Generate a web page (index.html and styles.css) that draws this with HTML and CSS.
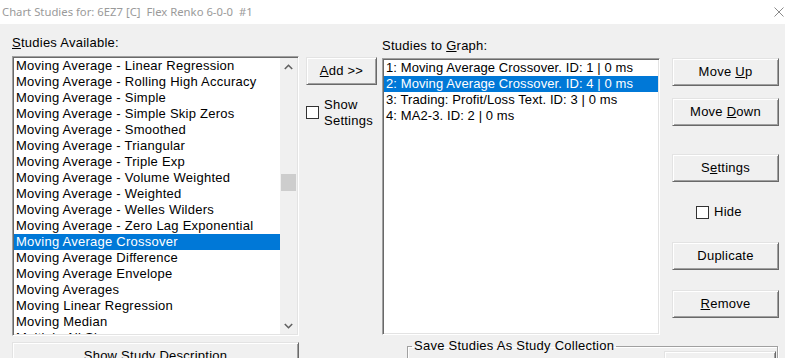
FILE: index.html
```html
<!DOCTYPE html>
<html>
<head>
<meta charset="utf-8">
<link rel="stylesheet" href="styles.css">
</head>
<body>
<div class="titlebar">
  <span class="title">Chart Studies for: 6EZ7 [C]  Flex Renko 6-0-0  #1</span>
  <svg class="close" width="10" height="10" viewBox="0 0 10 10"><path d="M0.5 0.5L9.5 9.5M9.5 0.5L0.5 9.5" stroke="#8a8a8a" stroke-width="1" fill="none"/></svg>
</div>
<div class="main">
  <div class="col col-avail">
    <div class="label label-avail"><u>S</u>tudies Available:</div>
    <div class="listbox list-avail">
      <div class="items">
        <div class="row">Moving Average - Linear Regression</div>
        <div class="row">Moving Average - Rolling High Accuracy</div>
        <div class="row">Moving Average - Simple</div>
        <div class="row">Moving Average - Simple Skip Zeros</div>
        <div class="row">Moving Average - Smoothed</div>
        <div class="row">Moving Average - Triangular</div>
        <div class="row">Moving Average - Triple Exp</div>
        <div class="row">Moving Average - Volume Weighted</div>
        <div class="row">Moving Average - Weighted</div>
        <div class="row">Moving Average - Welles Wilders</div>
        <div class="row">Moving Average - Zero Lag Exponential</div>
        <div class="row sel">Moving Average Crossover</div>
        <div class="row">Moving Average Difference</div>
        <div class="row">Moving Average Envelope</div>
        <div class="row">Moving Averages</div>
        <div class="row">Moving Linear Regression</div>
        <div class="row">Moving Median</div>
        <div class="row">Multiple All Slopes</div>
      </div>
      <div class="scrollbar">
        <div class="arrow"><svg width="9" height="6" viewBox="0 0 9 6"><path d="M0.8 5L4.5 1.3L8.2 5" stroke="#606060" stroke-width="1.6" fill="none"/></svg></div>
        <div class="track"><div class="thumb"></div></div>
        <div class="arrow"><svg width="9" height="6" viewBox="0 0 9 6"><path d="M0.8 1L4.5 4.7L8.2 1" stroke="#606060" stroke-width="1.6" fill="none"/></svg></div>
      </div>
    </div>
  </div>
  <div class="col col-add">
    <div class="btn btn-add"><span><u>A</u>dd &gt;&gt;</span></div>
    <div class="check check-show">
      <span class="box"></span>
      <span class="check-text">Show<br>Settings</span>
    </div>
  </div>
  <div class="col col-graph">
    <div class="label label-graph">Studies to <u>G</u>raph:</div>
    <div class="listbox list-graph">
      <div class="items">
        <div class="row">1: Moving Average Crossover. ID: 1 | 0 ms</div>
        <div class="row sel">2: Moving Average Crossover. ID: 4 | 0 ms</div>
        <div class="row">3: Trading: Profit/Loss Text. ID: 3 | 0 ms</div>
        <div class="row">4: MA2-3. ID: 2 | 0 ms</div>
      </div>
    </div>
  </div>
  <div class="col col-actions">
    <div class="btn"><span>Move <u>U</u>p</span></div>
    <div class="btn btn-down"><span>Move <u>D</u>own</span></div>
    <div class="btn btn-settings"><span>S<u>e</u>ttings</span></div>
    <div class="check check-hide">
      <span class="box"></span>
      <span class="check-text">Hide</span>
    </div>
    <div class="btn btn-dup"><span>Duplicate</span></div>
    <div class="btn btn-remove"><span><u>R</u>emove</span></div>
  </div>
</div>
<div class="bottom">
  <div class="btn btn-desc"><span>Show Study Description</span></div>
  <fieldset class="group">
    <legend>Save Studies As Study Collection</legend>
    <div class="group-body">
      <div class="btn btn-save"></div>
    </div>
  </fieldset>
</div>
</body>
</html>
```

FILE: styles.css
```css
html, body {
  margin: 0;
  padding: 0;
  width: 785px;
  height: 358px;
  overflow: hidden;
}
body {
  background: #f0f0f0;
  font-family: "Liberation Sans", Arial, sans-serif;
  font-size: 13px;
  letter-spacing: 0.25px;
  color: #000;
  line-height: 16px;
}
u { text-decoration: underline; text-underline-offset: 1px; }

.titlebar {
  height: 24px;
  background: #fff;
  display: flex;
  align-items: center;
  justify-content: space-between;
  padding-left: 2px;
  padding-right: 1px;
}
.title {
  font-family: "Noto Sans", "Open Sans", sans-serif;
  font-size: 11.3px;
  letter-spacing: 0;
  color: #9a9a9a;
  white-space: pre;
  margin-top: -1px;
}
.close { margin-top: -1px; }

.main {
  display: flex;
  padding-left: 12px;
  height: 312px;
}
.col { display: flex; flex-direction: column; }
.col-avail { width: 287px; }
.col-add { width: 71px; margin-left: 7px; padding-top: 33px; }
.col-graph { width: 278px; margin-left: 5px; }
.col-actions { width: 107px; margin-left: 12px; padding-top: 34px; }

.label { height: 16px; white-space: nowrap; }
.label-avail { margin-top: 11px; }
.label-graph { margin-top: 14px; }

.listbox {
  box-sizing: border-box;
  background: #fff;
  border-style: solid;
  border-width: 1px;
  border-color: #a0a0a0 #fff #fff #a0a0a0;
  box-shadow: inset 1px 1px 0 #696969, inset -1px -1px 0 #e3e3e3;
  padding: 1px;
  display: flex;
  overflow: hidden;
}
.list-avail { margin-top: 5px; height: 280px; }
.list-graph { margin-top: 4px; height: 277px; }
.list-graph .row { letter-spacing: 0.1px; }
.items { flex: 1; overflow: hidden; }
.row {
  height: 16px;
  padding-left: 2px;
  white-space: nowrap;
}
.row.sel { background: #0078d7; color: #fff; }

.scrollbar {
  width: 17px;
  background: #f0f0f0;
  display: flex;
  flex-direction: column;
}
.arrow {
  height: 17px;
  display: flex;
  align-items: center;
  justify-content: center;
}
.track { flex: 1; }
.thumb {
  margin-top: 99px;
  margin-left: 1px;
  width: 15px;
  height: 17px;
  background: #cdcdcd;
}

.btn {
  box-sizing: border-box;
  height: 28px;
  background: #f0f0f0;
  border-style: solid;
  border-width: 1px;
  border-color: #e3e3e3 #696969 #696969 #e3e3e3;
  box-shadow: inset 1px 1px 0 #fff, inset -1px -1px 0 #a0a0a0;
  display: flex;
  align-items: center;
  justify-content: center;
  white-space: nowrap;
}
.btn-down { margin-top: 12px; }
.btn-settings { margin-top: 28px; }
.btn-dup { margin-top: 22px; }
.btn-remove { margin-top: 20px; }

.check { display: flex; align-items: flex-start; }
.box {
  box-sizing: border-box;
  width: 13px;
  height: 13px;
  background: #fff;
  border: 1px solid #333;
  flex: none;
}
.check-show { margin-top: 12px; }
.check-show .box { margin-top: 9px; }
.check-show .check-text { margin-left: 5px; }
.check-hide { margin-top: 22px; padding-left: 24px; align-items: center; height: 16px; }
.check-hide .check-text { margin-left: 5px; }

.bottom {
  display: flex;
  align-items: flex-start;
  padding-left: 12px;
  margin-top: 2px;
}
.btn-desc { width: 287px; margin-top: 4px; }
.group {
  box-sizing: border-box;
  margin: 0 0 0 108px;
  width: 371px;
  height: 40px;
  padding: 0 1px 0 4px;
  border: 1px solid #a0a0a0;
  box-shadow: inset 1px 1px 0 #fff, 1px 1px 0 #fff;
}
.group legend {
  padding: 0 2px;
  line-height: 16px;
}
.group-body {
  display: flex;
  justify-content: flex-end;
}
.btn-save { width: 112px; margin-top: -3px; }
```
